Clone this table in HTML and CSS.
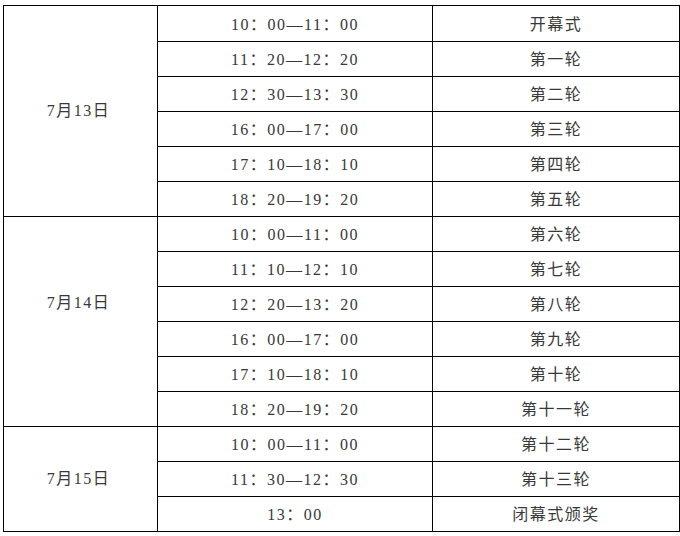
FILE: index.html
```html
<!DOCTYPE html>
<html lang="zh-CN">
<head>
<meta charset="utf-8">
<title>赛程</title>
<link rel="stylesheet" href="styles.css">
</head>
<body>
<table class="schedule">
  <colgroup>
    <col class="c-date">
    <col class="c-time">
    <col class="c-event">
  </colgroup>
  <tbody>
    <tr class="first"><td class="date" rowspan="6">7月13日</td><td>10：00—11：00</td><td>开幕式</td></tr>
    <tr><td>11：20—12：20</td><td>第一轮</td></tr>
    <tr><td>12：30—13：30</td><td>第二轮</td></tr>
    <tr><td>16：00—17：00</td><td>第三轮</td></tr>
    <tr><td>17：10—18：10</td><td>第四轮</td></tr>
    <tr><td>18：20—19：20</td><td>第五轮</td></tr>
    <tr><td class="date date-high" rowspan="6">7月14日</td><td>10：00—11：00</td><td>第六轮</td></tr>
    <tr><td>11：10—12：10</td><td>第七轮</td></tr>
    <tr><td>12：20—13：20</td><td>第八轮</td></tr>
    <tr><td>16：00—17：00</td><td>第九轮</td></tr>
    <tr><td>17：10—18：10</td><td>第十轮</td></tr>
    <tr><td>18：20—19：20</td><td>第十一轮</td></tr>
    <tr><td class="date" rowspan="3">7月15日</td><td>10：00—11：00</td><td>第十二轮</td></tr>
    <tr><td>11：30—12：30</td><td>第十三轮</td></tr>
    <tr><td>13：00</td><td>闭幕式颁奖</td></tr>
  </tbody>
</table>
</body>
</html>
```

FILE: styles.css
```css
html, body {
  margin: 0;
  padding: 0;
  background: #ffffff;
}

body {
  padding: 5px 0 0 3px;
}

.schedule {
  border-collapse: collapse;
  table-layout: fixed;
  width: 676px;
  font-family: "Liberation Serif", "Noto Sans CJK SC", serif;
  font-size: 16px;
  color: #383838;
  letter-spacing: 1.5px;
}

.c-date { width: 154px; }
.c-time { width: 275px; }
.c-event { width: 247px; }

.schedule td {
  border: 1px solid #000;
  height: 35px;
  padding: 2px 0 0 0;
  text-align: center;
  vertical-align: middle;
  line-height: 20px;
  box-sizing: border-box;
}

.schedule tr.first td {
  height: 36px;
}

.schedule td.date {
  padding: 0 4px 0 0;
}

.schedule td.date-high {
  padding-bottom: 37px;
}
```
